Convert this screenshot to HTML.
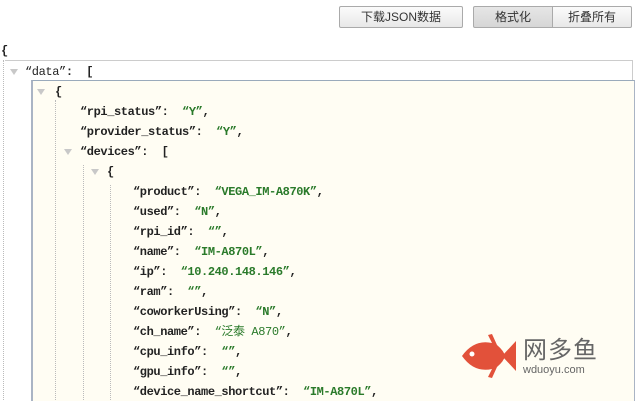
<!DOCTYPE html>
<html><head><meta charset="utf-8"><style>
body{margin:0;width:640px;height:400px;overflow:hidden;background:#fff;font-family:"Liberation Mono","Noto Sans CJK SC",monospace;position:relative}
.btn{position:absolute;top:6px;height:21px;border:1px solid #aaa;background:linear-gradient(#fbfbfb,#e8e8e8);font:12px "Liberation Sans","Noto Sans CJK SC",sans-serif;color:#333;text-align:center;line-height:21px;box-sizing:border-box;border-radius:2px}
.l{position:absolute;font-size:12px;font-weight:bold;letter-spacing:-0.4px;color:#222;white-space:pre;line-height:14px}
.s{color:#2a7a2a;font-weight:bold}
.k{color:#111}
.tri{position:absolute;width:0;height:0;border-left:4px solid transparent;border-right:4px solid transparent;border-top:6px solid #c8c8c8}
.dv{position:absolute;border-left:1px dotted #bbb}
</style></head><body>
<div class="btn" style="left:339px;width:124px;height:22px">下载JSON数据</div>
<div class="btn" style="left:473px;width:80px;height:22px;background:linear-gradient(#e6e6e6,#d6d6d6);border-radius:2px 0 0 2px">格式化</div>
<div class="btn" style="left:552px;width:80px;height:22px;border-radius:0 2px 2px 0">折叠所有</div>

<div class="l" style="left:1px;top:44px">{</div>
<div class="dv" style="left:3px;top:60px;height:340px"></div>
<div style="position:absolute;left:5px;top:60px;width:627px;height:340px;border-top:1px solid #ccc;border-right:1px solid #ccc;background:#fff"></div>
<div style="position:absolute;left:31px;top:80px;width:601px;height:320px;border-top:1px solid #9aaabb;border-left:2px solid #aab4c4;border-right:1px solid #aab4c4;background:#fffdf3"></div>
<div class="dv" style="left:55px;top:100px;height:300px"></div>
<div class="dv" style="left:83px;top:165px;height:235px"></div>
<div class="dv" style="left:110px;top:185px;height:215px"></div>

<div class="tri" style="left:10px;top:69px"></div>
<div class="l" style="left:25px;top:65px"><span style="font-weight:normal">“data”</span>:  [</div>
<div class="tri" style="left:37px;top:89px"></div>
<div class="l" style="left:55px;top:85px">{</div>
<div class="l" style="left:80px;top:105px">“rpi_status”:  <span class="s">“Y”</span>,</div>
<div class="l" style="left:80px;top:125px">“provider_status”:  <span class="s">“Y”</span>,</div>
<div class="tri" style="left:64px;top:149px"></div>
<div class="l" style="left:80px;top:145px">“devices”:  [</div>
<div class="tri" style="left:91px;top:169px"></div>
<div class="l" style="left:107px;top:165px">{</div>
<div class="l" style="left:133px;top:185px">“product”:  <span class="s">“VEGA_IM-A870K”</span>,</div>
<div class="l" style="left:133px;top:205px">“used”:  <span class="s">“N”</span>,</div>
<div class="l" style="left:133px;top:225px">“rpi_id”:  <span class="s">“”</span>,</div>
<div class="l" style="left:133px;top:245px">“name”:  <span class="s">“IM-A870L”</span>,</div>
<div class="l" style="left:133px;top:265px">“ip”:  <span class="s">“10.240.148.146”</span>,</div>
<div class="l" style="left:133px;top:285px">“ram”:  <span class="s">“”</span>,</div>
<div class="l" style="left:133px;top:305px">“coworkerUsing”:  <span class="s">“N”</span>,</div>
<div class="l" style="left:133px;top:325px">“ch_name”:  <span class="s" style="font-weight:normal">“泛泰 A870”</span>,</div>
<div class="l" style="left:133px;top:345px">“cpu_info”:  <span class="s">“”</span>,</div>
<div class="l" style="left:133px;top:365px">“gpu_info”:  <span class="s">“”</span>,</div>
<div class="l" style="left:133px;top:385px">“device_name_shortcut”:  <span class="s">“IM-A870L”</span>,</div>

<svg style="position:absolute;left:460px;top:333px" width="56" height="50" viewBox="0 0 56 50">
<path d="M2 23 Q14 6 32 10 L28 2 L32 1 L37 12 Q44 18 45 23 Q44 28 37 34 L32 45 L28 44 L32 36 Q14 40 2 23Z" fill="#e2513a"/>
<path d="M42 23 L56 8 L56 38Z" fill="#e2513a"/>
<circle cx="12" cy="21" r="2.5" fill="#fff"/>
</svg>
<div style="position:absolute;left:523px;top:334px;font:24px 'Noto Sans CJK SC',sans-serif;color:#666;line-height:28px;letter-spacing:1px">网多鱼</div>
<div style="position:absolute;left:523px;top:364px;font:11px 'Liberation Sans',sans-serif;color:#666">wduoyu.com</div>
</body></html>
